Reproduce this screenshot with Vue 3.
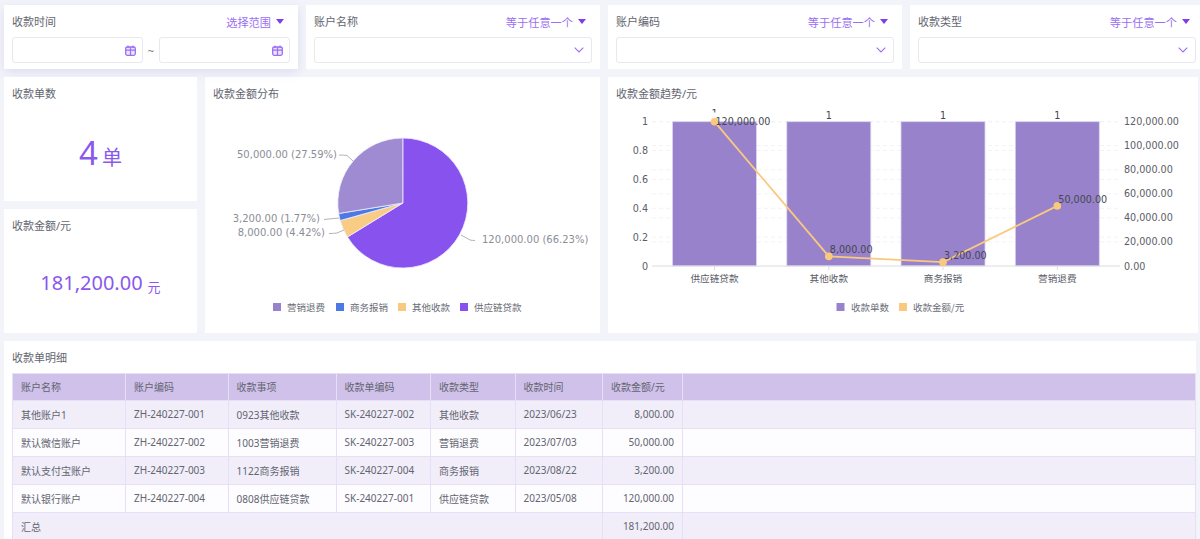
<script setup>
const filters = [
  { label: '账户名称', op: '等于任意一个' },
  { label: '账户编码', op: '等于任意一个' },
  { label: '收款类型', op: '等于任意一个' }
]
const rows = [
  ['其他账户1', 'ZH-240227-001', '0923其他收款', 'SK-240227-002', '其他收款', '2023/06/23', '8,000.00'],
  ['默认微信账户', 'ZH-240227-002', '1003营销退费', 'SK-240227-003', '营销退费', '2023/07/03', '50,000.00'],
  ['默认支付宝账户', 'ZH-240227-003', '1122商务报销', 'SK-240227-004', '商务报销', '2023/08/22', '3,200.00'],
  ['默认银行账户', 'ZH-240227-004', '0808供应链贷款', 'SK-240227-001', '供应链贷款', '2023/05/08', '120,000.00']
]
const heads = ['账户名称', '账户编码', '收款事项', '收款单编码', '收款类型', '收款时间', '收款金额/元', '']

// pie
const cx = 402.8, cy = 203, r = 65
const shares = [
  { v: 66.23, c: '#8852ee' },
  { v: 4.42, c: '#f9cc85' },
  { v: 1.77, c: '#4d79e6' },
  { v: 27.59, c: '#9f8bd2' }
]
let acc = 0
const slices = shares.map(s => {
  const a0 = acc / 100 * Math.PI * 2
  acc += s.v
  const a1 = acc / 100 * Math.PI * 2
  const p = a => `${(cx + r * Math.sin(a)).toFixed(2)} ${(cy - r * Math.cos(a)).toFixed(2)}`
  return { c: s.c, d: `M${cx} ${cy}L${p(a0)}A${r} ${r} 0 ${s.v > 50 ? 1 : 0} 1 ${p(a1)}Z` }
})
const pieLabels = [
  { t: '50,000.00 (27.59%)', x: 337, y: 158, a: 'end' },
  { t: '3,200.00 (1.77%)', x: 320, y: 222, a: 'end' },
  { t: '8,000.00 (4.42%)', x: 325, y: 236, a: 'end' },
  { t: '120,000.00 (66.23%)', x: 482, y: 243, a: 'start' }
]
const pieLines = [
  'M339 155Q344 155 347 155.500L353 161',
  'M324 219.500L339 218',
  'M329 233.500Q334 233.500 337 233L344 230',
  'M461 235L470 240Q472 240.500 475 240.500'
]
const pieLegend = [
  { t: '营销退费', c: '#9882cb', x: 273 },
  { t: '商务报销', c: '#4d79e6', x: 336 },
  { t: '其他收款', c: '#f9c97e', x: 398 },
  { t: '供应链贷款', c: '#8852ee', x: 460 }
]

// trend
const top = 121.7, bot = 266
const leftTicks = ['0', '0.2', '0.4', '0.6', '0.8', '1']
const rightTicks = ['0.00', '20,000.00', '40,000.00', '60,000.00', '80,000.00', '100,000.00', '120,000.00']
const tickY = (i, n) => bot - (bot - top) * i / n
const gridY = [...leftTicks.map((_, i) => tickY(i, 5)), ...rightTicks.map((_, i) => tickY(i, 6))].filter(y => y < bot - 1)
const bars = [
  { x: 672.5, name: '供应链贷款', val: 120000, label: '120,000.00' },
  { x: 786.8, name: '其他收款', val: 8000, label: '8,000.00' },
  { x: 901, name: '商务报销', val: 3200, label: '3,200.00' },
  { x: 1015.3, name: '营销退费', val: 50000, label: '50,000.00' }
].map(b => ({ ...b, cx: b.x + 42, py: bot - (bot - top) * b.val / 120000 }))
const linePts = bars.map(b => `${b.cx},${b.py.toFixed(1)}`).join(' ')
</script>

<template>
  <div class="page">
    <div class="filters">
      <section class="card filter raised">
        <div class="filter-head">
          <span class="label">收款时间</span>
          <span class="op">选择范围<i class="caret"></i></span>
        </div>
        <div class="range">
          <div class="input">
            <svg class="cal" viewBox="0 0 11 11" width="11" height="11"><rect x=".7" y="2" width="9.600" height="8.300" rx="1.500" fill="#ece3fd" stroke="#9a6ff3" stroke-width="1.300"/><path d="M.7 5.200h9.600M5.500 2v8.300M3 .5v2.500M8 .5v2.500" fill="none" stroke="#9a6ff3" stroke-width="1.200"/></svg>
          </div>
          <span class="tilde">~</span>
          <div class="input">
            <svg class="cal" viewBox="0 0 11 11" width="11" height="11"><rect x=".7" y="2" width="9.600" height="8.300" rx="1.500" fill="#ece3fd" stroke="#9a6ff3" stroke-width="1.300"/><path d="M.7 5.200h9.600M5.500 2v8.300M3 .5v2.500M8 .5v2.500" fill="none" stroke="#9a6ff3" stroke-width="1.200"/></svg>
          </div>
        </div>
      </section>
      <section v-for="f in filters" :key="f.label" class="card filter">
        <div class="filter-head">
          <span class="label">{{ f.label }}</span>
          <span class="op">{{ f.op }}<i class="caret"></i></span>
        </div>
        <div class="input">
          <svg class="chev" viewBox="0 0 10 6" width="10" height="6"><path d="M.7.700 5 5 9.300.700" fill="none" stroke="#9b6ff2" stroke-width="1.100"/></svg>
        </div>
      </section>
    </div>

    <div class="charts">
      <div class="kpis">
        <section class="card kpi">
          <h3 class="title">收款单数</h3>
          <div class="kpi-value big"><span class="num4">4</span><span class="unit4">单</span></div>
        </section>
        <section class="card kpi">
          <h3 class="title">收款金额/元</h3>
          <div class="kpi-value amount"><span class="numA">181,200.00</span><span class="unitA">元</span></div>
        </section>
      </div>

      <section class="card pie">
        <h3 class="title">收款金额分布</h3>
        <svg class="chart" viewBox="205 109 395 224" width="395" height="224">
          <path v-for="s in slices" :key="s.c" :d="s.d" :fill="s.c" stroke="#f1edfb" stroke-width="0.800"/>
          <path v-for="l in pieLines" :key="l" :d="l" fill="none" stroke="#b4b4b8" stroke-width="1"/>
          <text v-for="l in pieLabels" :key="l.t" :x="l.x" :y="l.y" :text-anchor="l.a" class="pie-label">{{ l.t }}</text>
          <g v-for="l in pieLegend" :key="l.t">
            <rect :x="l.x" y="303" width="8" height="8" :fill="l.c"/>
            <text :x="l.x + 14" y="311" class="legend">{{ l.t }}</text>
          </g>
        </svg>
      </section>

      <section class="card trend">
        <h3 class="title">收款金额趋势/元</h3>
        <svg class="chart" viewBox="608 109 590 224" width="590" height="224">
          <defs>
            <clipPath id="first-one"><rect x="700" y="105" width="30" height="7.500"/></clipPath>
          </defs>
          <line v-for="y in gridY" :key="y" x1="652" x2="1120" :y1="y" :y2="y" stroke="#f3f3f6" stroke-dasharray="4 3"/>
          <rect v-for="b in bars" :key="b.x" :x="b.x" :y="top" width="84" :height="bot - top" fill="#9882cb" stroke="#dcd5f0" stroke-width="0.800"/>
          <line x1="652" x2="1120" :y1="bot" :y2="bot" stroke="#dcdce0" stroke-width="1"/>
          <line v-for="b in bars" :key="'t' + b.x" :x1="b.cx" :x2="b.cx" :y1="bot" :y2="bot + 4" stroke="#dcdce0"/>
          <text v-for="(t, i) in leftTicks" :key="t" x="648" :y="tickY(i, 5) + 3.500" text-anchor="end" class="axis">{{ t }}</text>
          <text v-for="(t, i) in rightTicks" :key="t" x="1124" :y="tickY(i, 6) + 3.500" class="axis">{{ t }}</text>
          <text v-for="b in bars" :key="'n' + b.x" :x="b.cx" y="282" text-anchor="middle" class="cat">{{ b.name }}</text>
          <text v-for="(b, i) in bars" :key="'v' + b.x" :x="b.cx" :y="i === 0 ? 117 : 119" text-anchor="middle" class="val" :clip-path="i === 0 ? 'url(#first-one)' : null">1</text>
          <polyline :points="linePts" fill="none" stroke="#f9c97e" stroke-width="1.800"/>
          <circle v-for="b in bars" :key="'c' + b.x" :cx="b.cx" :cy="b.py" r="3.800" fill="#f9c97e"/>
          <text v-for="b in bars" :key="'l' + b.x" :x="b.cx + 1" :y="b.py + (b.val === 120000 ? 3.500 : -3)" class="val">{{ b.label }}</text>
          <rect x="836.500" y="303" width="8" height="8" fill="#9882cb"/>
          <text x="851" y="311" class="legend">收款单数</text>
          <rect x="899" y="303" width="8" height="8" fill="#f9c97e"/>
          <text x="913" y="311" class="legend">收款金额/元</text>
        </svg>
      </section>
    </div>

    <section class="card detail">
      <h3 class="title">收款单明细</h3>
      <table class="grid">
        <colgroup>
          <col class="c1"><col class="c2"><col class="c3"><col class="c4"><col class="c5"><col class="c6"><col class="c7"><col>
        </colgroup>
        <thead>
          <tr><th v-for="(h, i) in heads" :key="i">{{ h }}</th></tr>
        </thead>
        <tbody>
          <tr v-for="r in rows" :key="r[0]">
            <td v-for="(c, i) in r" :key="i" :class="{ right: i === 6 }">{{ c }}</td>
            <td></td>
          </tr>
          <tr class="sum">
            <td colspan="6" class="sum-label">汇总</td>
            <td class="right">181,200.00</td>
            <td></td>
          </tr>
        </tbody>
      </table>
    </section>
  </div>
</template>

<style>
html, body { margin: 0; height: 100%; overflow: hidden; background: #f3f4fa; }
</style>

<style scoped>
.page {
  width: 1194px;
  padding: 5px 0 0 4px;
  display: flex;
  flex-direction: column;
  gap: 8px;
  font-family: "Noto Sans", "Noto Sans CJK SC", sans-serif;
  font-size: 11px;
  color: #63656f;
}
.card { background: #fff; box-sizing: border-box; }
.filters { display: flex; gap: 8px; width: 1200px; }
.filter { width: 294px; height: 64px; padding: 8px 8px 0; flex: none; }
.raised { box-shadow: 0 3px 10px rgba(90, 80, 170, 0.14); position: relative; }
.filter-head { display: flex; justify-content: space-between; align-items: center; height: 17px; margin-bottom: 7px; padding-right: 6px; }
.label { color: #63656f; line-height: 17px; }
.op { color: #9a6ff2; display: flex; align-items: center; font-size: 11.200px; }
.caret { width: 0; height: 0; border: 4px solid transparent; border-top: 5px solid #7c3fe8; border-bottom: 0; margin-left: 5px; }
.range { display: flex; align-items: center; }
.range .input { flex: 1; }
.tilde { width: 16px; text-align: center; color: #777; }
.input { height: 26px; border: 1px solid #e8e8ee; border-radius: 3px; box-sizing: border-box; display: flex; align-items: center; justify-content: flex-end; padding-right: 6px; background: #fff; }
.chev { margin-right: 1px; }
.charts { display: flex; gap: 8px; height: 256px; }
.kpis { width: 193px; display: flex; flex-direction: column; gap: 8px; }
.kpi { flex: 1; position: relative; display: flex; flex-direction: column; }
.title { margin: 0; padding: 8px 8px 0; height: 32px; box-sizing: border-box; font-size: 11px; font-weight: 400; line-height: 17px; color: #63656f; }
.kpi-value { flex: 1; display: flex; align-items: center; justify-content: center; color: #8a58ee; }
.big { padding-bottom: 4px; }
.num4 { font-size: 33px; line-height: 40px; }
.unit4 { font-size: 20px; margin-left: 4px; margin-top: 6px; }
.amount { padding-bottom: 8px; }
.numA { font-size: 20px; line-height: 28px; }
.unitA { font-size: 13px; margin-left: 5px; margin-top: 6px; }
.pie { width: 395px; }
.trend { width: 590px; }
.chart { display: block; }
.chart text { font-family: "DejaVu Sans", sans-serif; }
.chart .legend, .chart .cat { font-family: "Noto Sans CJK SC", sans-serif; }
.pie-label { font-size: 10px; fill: #8c8e96; }
.legend { font-size: 9.500px; fill: #6a6c76; }
.axis { font-size: 9.600px; fill: #5b5d68; }
.cat { font-size: 9.600px; fill: #5b5d68; }
.val { font-size: 9.600px; fill: #45474f; }
.detail { width: 1192px; padding-bottom: 0; height: 200px; }
.title + .grid { margin: 0 0 0 8px; }
.grid { width: 1184px; border-collapse: collapse; table-layout: fixed; font-size: 10px; color: #63656f; }
.c1 { width: 113px; }
.c2 { width: 102.500px; }
.c3 { width: 108px; }
.c4 { width: 94.500px; }
.c5 { width: 84.500px; }
.c6 { width: 87.500px; }
.c7 { width: 80px; }
th, td { box-sizing: border-box; padding: 0 8px; height: 28px; border: 1px solid #e6dff7; text-align: left; font-weight: 400; white-space: nowrap; overflow: hidden; }
th { background: #d0c1eb; border-color: #e6e0f6; height: 26.500px; }
tbody tr:nth-child(odd) td { background: #f1eefa; }
tbody tr:nth-child(even) td { background: #fdfcff; }
.right { text-align: right; }
</style>
